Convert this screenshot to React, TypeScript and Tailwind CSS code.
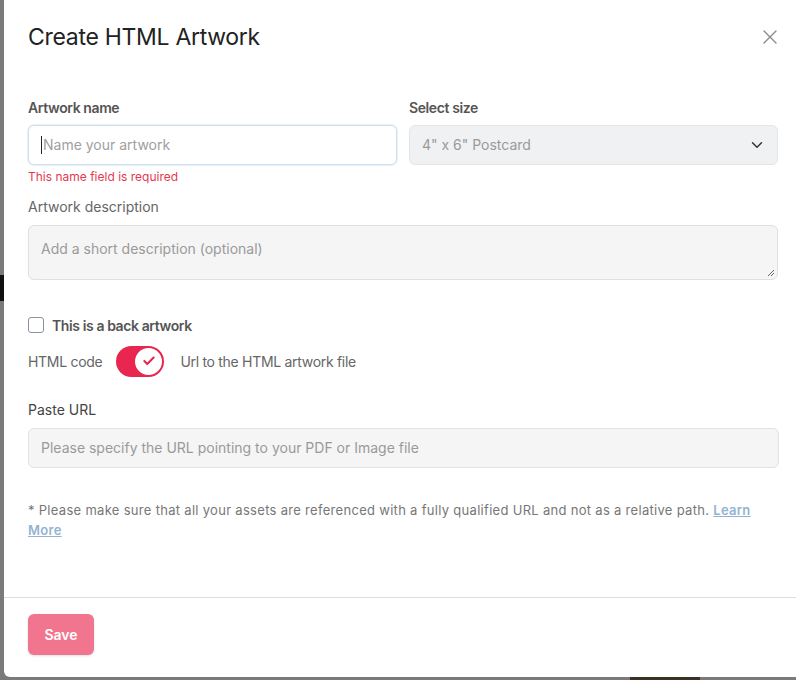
import { X, ChevronDown, Check } from "lucide-react";

export default function App() {
  return (
    <div
      className="relative h-[680px] w-[796px] overflow-hidden bg-[#7a7a7a]"
      style={{ fontFamily: "Inter, 'Open Sans', sans-serif" }}
    >
      {/* bits of page showing behind the backdrop */}
      <div className="absolute left-0 top-[275px] h-[26px] w-[4px] bg-[#111]" />
      <div className="absolute bottom-0 left-[630px] h-[3px] w-[70px] bg-[#3a3226]" />

      <div className="ml-[4px] flex h-[677px] w-[798px] flex-col rounded-b-md bg-white">
        <div className="flex items-center justify-between px-6 pt-[20px]">
          <h1 className="text-[23px] font-normal tracking-[-0.3px] text-[#222]">Create HTML Artwork</h1>
          <X className="mr-[-4px] h-[24px] w-[24px] text-[#8a8a8a]" strokeWidth={1.4} />
        </div>

        <div className="flex flex-1 flex-col px-6 pt-[42px]">
          <div className="grid grid-cols-2 gap-3">
            <div className="flex flex-col">
              <label className="text-[14px] font-semibold tracking-[-0.4px] text-[#555]">Artwork name</label>
              <div className="mt-[7px] flex h-[40px] items-center rounded-md border border-[#cfe0ef] bg-white px-3 shadow-[0_0_0_1px_#e6f0f8]">
                <span className="mr-[1px] h-[18px] w-[1px] bg-[#222]" />
                <span className="text-[14px] text-[#a0a0a0]">Name your artwork</span>
              </div>
              <p className="mt-[3px] text-[12px] text-[#e5384f]">This name field is required</p>
            </div>
            <div className="flex flex-col">
              <label className="text-[14px] font-semibold tracking-[-0.4px] text-[#555]">Select size</label>
              <div className="mt-[7px] flex h-[40px] items-center justify-between rounded-md border border-[#e4e5e8] bg-[#f0f1f3] pl-3 pr-[11px]">
                <span className="text-[14px] text-[#9a9a9a]">4" x 6" Postcard</span>
                <ChevronDown className="h-[18px] w-[18px] text-[#333]" strokeWidth={2} />
              </div>
            </div>
          </div>

          <label className="mt-[10px] text-[14px] text-[#666]">Artwork description</label>
          <div className="relative mt-[8px] h-[55px] rounded-md border border-[#e0e0e0] bg-[#f5f5f5] px-3 pt-[10px]">
            <span className="text-[14px] text-[#9a9a9a]">Add a short description (optional)</span>
            <svg className="absolute bottom-[2px] right-[2px] h-[8px] w-[8px]" viewBox="0 0 8 8">
              <path d="M1 7 L7 1 M4 7 L7 4" stroke="#666" strokeWidth="1" />
            </svg>
          </div>

          <div className="mt-[35px] flex items-center gap-2">
            <div className="h-[16px] w-[16px] rounded-[3px] border border-[#8a94a0] bg-white" />
            <span className="text-[14px] font-semibold tracking-[-0.4px] text-[#555]">This is a back artwork</span>
          </div>

          <div className="mt-[10px] flex items-center">
            <span className="text-[14px] tracking-[-0.3px] text-[#666]">HTML code</span>
            <div className="ml-[14px] flex h-[31px] w-[48px] items-center justify-end rounded-full bg-[#e8264f] p-[2px]">
              <div className="flex h-[27px] w-[27px] items-center justify-center rounded-full bg-white">
                <Check className="h-[14px] w-[14px] text-[#e8264f]" strokeWidth={3.5} />
              </div>
            </div>
            <span className="ml-[16px] text-[14px] tracking-[-0.3px] text-[#666]">Url to the HTML artwork file</span>
          </div>

          <label className="mt-[22px] text-[14px] text-[#444]">Paste URL</label>
          <div className="mt-[8px] flex h-[40px] w-[751px] items-center rounded-md border border-[#e2e2e2] bg-[#f5f5f5] px-3">
            <span className="text-[14px] text-[#9a9a9a]">Please specify the URL pointing to your PDF or Image file</span>
          </div>

          <p className="mt-[32px] w-[740px] text-[13px] leading-[20px] tracking-[0.3px] text-[#777]">
            * Please make sure that all your assets are referenced with a fully qualified URL and not as a relative path.{" "}
            <a className="font-semibold text-[#93b3d2] underline">Learn More</a>
          </p>
        </div>

        <div className="border-t border-[#dedede] px-6 pb-[22px] pt-[16px]">
          <button className="h-[41px] w-[66px] rounded-md bg-[#f27590] text-[14px] font-semibold text-white shadow-sm">
            Save
          </button>
        </div>
      </div>
    </div>
  );
}
